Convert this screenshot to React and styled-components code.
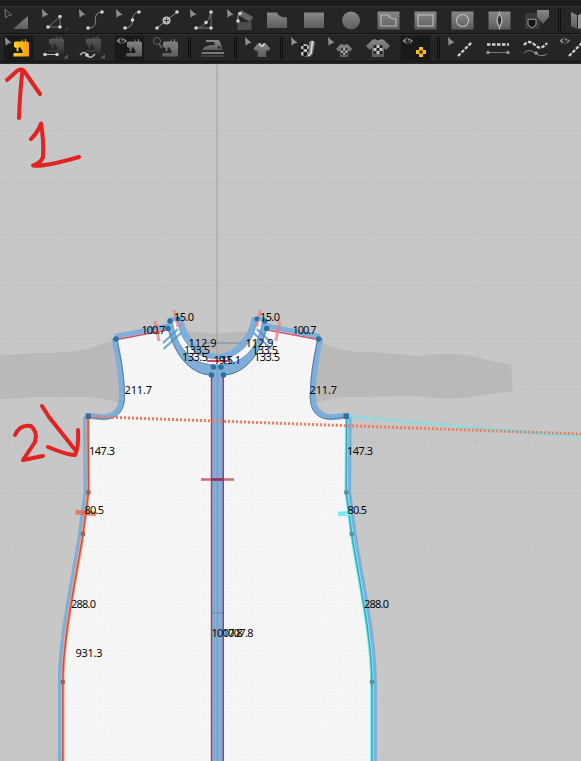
import React from "react";
import styled, { createGlobalStyle } from "styled-components";

const GlobalStyle = createGlobalStyle`
  body { margin: 0; background: #c7c7c7; overflow: hidden; }
`;

const Window = styled.main`
  display: flex;
  flex-direction: column;
  width: 581px;
  height: 761px;
  overflow: hidden;
  background: #c7c7c7;
`;

const Toolbars = styled.header`
  flex: none;
  box-sizing: border-box;
  height: 64px;
  padding-top: 6px;
  background: #1c1c1e;
  border-bottom: 2px solid #242424;
`;

const ToolRow = styled.div`
  box-sizing: border-box;
  display: flex;
  align-items: center;
  gap: 6px;
  height: 28px;
  padding-left: 3px;
  overflow: hidden;
  background: #252527;
  border-top: 1px solid #303033;
  border-bottom: 1px solid #101011;
`;

const Tool = styled.button`
  flex: none;
  width: 31px;
  height: 26px;
  padding: 0;
  border: 0;
  background: ${(p) => (p.$active ? "#19191a" : "transparent")};
  box-shadow: ${(p) => (p.$active ? "inset 0 0 0 1px #202022" : "none")};
`;

const Icon = styled.svg`
  display: block;
  width: 31px;
  height: 26px;
`;

const Separator = styled.span`
  flex: none;
  box-sizing: border-box;
  width: 3px;
  height: 22px;
  border: solid #0d0d0e;
  border-width: 0 1px;
`;

const Canvas = styled.svg`
  display: block;
  flex: none;
  width: 581px;
  height: 697px;
`;

const Measure = styled.text`
  font-family: "Noto Sans", "Open Sans", sans-serif;
  font-size: 11px;
  fill: #080808;
`;

const Cursor = () => <path d="M2 2 L8.600 8 L5.800 8.300 L4.800 9 L2.600 10.800 Z" fill="#8e8e8e" />;
const Corner = () => <path d="M28 19v4.500h-4.500z" fill="#5c5c5e" />;
const Dots = ({ at }) => at.map(([x, y]) => <circle key={`${x}-${y}`} cx={x} cy={y} r="1.800" fill="#d2d2d2" />);
const Machine = ({ fill = "url(#metal)", x = 0, y = 0 }) => (
  <path
    transform={`translate(${x} ${y})`}
    d="M11 8q0-1.500 1.500-1.500H18.500V4.500h1v2H22V4h1v2.500h1q2 0 2 2V21.500H10.500V18H19.500V15.500L18 14V12.500H15.500V15.500L14.500 17L13.500 15.500V13L11 12z"
    fill={fill}
  />
);
const Eye = () => (
  <g>
    <path d="M2.500 6Q7.500-1 13 6Q7.500 11 2.500 6z" fill="#8b8b8b" />
    <circle cx="8" cy="5.400" r="2.500" fill="#242426" />
    <circle cx="8.500" cy="4.700" r=".8" fill="#d8d8d8" />
  </g>
);
const Shirt = ({ checks }) => (
  <g>
    <path d="M6 1L9 0q3 2.500 6 0l3 1 6 6-4 4-2-2v9H6V9l-2 2-4-4z" fill="url(#metal)" />
    {checks ? (
      <g>
        <path d="M7.500 6h9v9h-9z" fill="#272729" />
        <path d="M10.500 6h3v3h-3zm-3 3h3v3h-3zm6 0h3v3h-3zm-3 3h3v3h-3z" fill="#c4c4c4" />
      </g>
    ) : (
      <path d="M8.500 0q.5 4 3.500 4t3.500-4" fill="none" stroke="#e2e2e2" strokeWidth="1.700" />
    )}
  </g>
);

const framed = (inner) => (
  <g>
    <rect x="4.500" y="4.500" width="22" height="18" fill="url(#metal)" />
    <g fill="none" stroke="#b9b9b9" strokeWidth="1.200">{inner}</g>
  </g>
);

const drawings = {
  transform: <g><path d="M2 2l6.600 6-2.800.3-3.200 2.500z" fill="none" stroke="#777" /><path d="M10 22L25 9v13z" fill="url(#metal)" /></g>,
  editPoints: <g><Cursor /><path d="M8 20L20 10V20z" fill="none" stroke="#777" /><Dots at={[[8, 20], [20, 9.500], [20, 20]]} /><path d="M28 20v3.500h-3.500z" fill="#434345" /></g>,
  curve: <g><Cursor /><path d="M11 21C25 21 12 6 25 5" fill="none" stroke="#929292" /><Dots at={[[11, 21], [25, 5]]} /></g>,
  curvePoint: <g><Cursor /><path d="M11 21C18 20 18 17 18.500 13C19 8 20 6 25 5" fill="none" stroke="#929292" /><Dots at={[[11, 21], [18.500, 13], [25, 5]]} /></g>,
  addPoint: <g><path d="M6 21L26 5" stroke="#929292" /><Dots at={[[6, 21], [26, 5]]} /><circle cx="15.500" cy="13.500" r="4" fill="#bcbcbc" /><path d="M13 13.500h5m-2.500-2.500v5" stroke="#444" /></g>,
  smooth: <g><Cursor /><path d="M8 21Q20 20 23 5V21z" fill="none" stroke="#777" /><Dots at={[[8, 21], [18, 15.500], [23, 5], [23, 21]]} /></g>,
  rotate: <g><Cursor /><path d="M12.500 15v8h14v-8z" fill="#4d4d4f" /><path d="M16 3l12 7-3 5-12-7z" fill="#646466" /><path d="M15 6Q12 8 13 14" fill="none" stroke="#aaa" /><Dots at={[[15, 6.500], [13, 14]]} /></g>,
  polygon: <path d="M5 5.500h10q2 5 10 5v10.500H5z" fill="url(#metal)" />,
  rectangle: <rect x="5" y="5.500" width="20" height="15.500" fill="url(#metal)" />,
  circle: <circle cx="15" cy="13.500" r="9" fill="url(#metal)" />,
  innerPolygon: framed(<path d="M8 8h7q2 4 8 4v7H8z" />),
  innerRect: framed(<rect x="8" y="8" width="15" height="11" />),
  innerCircle: framed(<circle cx="15.500" cy="13.500" r="6" />),
  dart: framed(<path d="M15.500 7q5 6.500 0 13q-5-6.500 0-13zM15.500 4.500v2.500m0 13v2.500" fill="#303032" />),
  pocket: <g><path d="M4 6h15v16H4z" fill="#39393b" /><path d="M7 12q4 1 8 0v6l-4 3-4-3z" fill="#151516" stroke="#999" /><path d="M16 3h12v7l-6 7-6-7z" fill="url(#metal)" /></g>,
  fold: <g><path d="M4 5l6 3v14l-6-3z" fill="url(#metal)" /><path d="M11 8l7-3v15l-7 2z" fill="#999" /></g>,
  sewEdit: <g><Cursor /><Machine fill="url(#gold)" /></g>,
  sewSegment: <g><Machine x={-2} y={-3} fill="url(#dim)" /><path d="M4 19.500h15" stroke="#252527" strokeWidth="5" /><path d="M5 19.500h12" stroke="#bbb" /><Dots at={[[5, 19.500], [17, 19.500]]} /><Corner /></g>,
  sewFree: <g><Machine x={-2} y={-3} fill="url(#dim)" /><path d="M3 19.500h17" stroke="#252527" strokeWidth="5" /><path d="M3 20q4-5 7 0t8-1" fill="none" stroke="#bbb" strokeWidth="1.500" /><Dots at={[[10, 20]]} /><Corner /></g>,
  sewShow: <g><Eye /><Machine x={2} /></g>,
  sewFind: <g><circle cx="6" cy="6" r="3.500" fill="none" stroke="#686868" /><path d="M8 9l3 4" stroke="#686868" strokeWidth="1.500" /><Machine x={1} /></g>,
  iron: <g><path d="M5 15q2-5 13-5L17 7H9V5h12q3 0 4 10z" fill="url(#metal)" /><path d="M5 17h22v2H4z" fill="#777" /><path d="M4 20h23v2H4z" fill="#3d3d3f" /><circle cx="22" cy="12.500" r="1.300" fill="#222" /></g>,
  clothing: <g><Cursor /><g transform="translate(10.500 8) scale(.7 .78)"><Shirt /></g></g>,
  texture: <g><Cursor /><path d="M12 8q5 1 8 3l3 9q-6 3-11 0z" fill="#bbb" /><path d="M12 8h2.500v3H12zm2.500 3H18v3h-3.500zM12 14h2.500v3H12zm2.500 3H18v4h-3.500zM18 14h2.500v3H18z" fill="#171718" /><path d="M20 7q3-3 6 0l-2 12q-2 4-8 3 4-2 4-15z" fill="url(#metal)" /><path d="M23.500 6l-1.500 12-3 3" fill="none" stroke="#e0e0e0" strokeWidth="1.700" /></g>,
  textureShirt: <g><Cursor /><g transform="translate(10 9) scale(.68 .72)"><Shirt checks /></g></g>,
  colorShirt: <g transform="translate(3 4)"><Shirt checks /></g>,
  showPattern: <g><Eye /><path d="M19 12h4v3h3v4h-3v3h-4v-3h-3v-4h3z" fill="#f9bb16" /><path d="M19.500 15.500h3v3h-3z" fill="#29251a" /></g>,
  topStitch: <g><Cursor /><path d="M12 21L26 7" stroke="#d2d2d2" strokeWidth="2.300" strokeDasharray="3.500 1.500" /></g>,
  segmentStitch: <g><path d="M4 9.500h22" stroke="#d2d2d2" strokeWidth="2.300" strokeDasharray="3.500 1.500" /><path d="M4 17.500h22" stroke="#777" /><circle cx="5" cy="17.500" r="1.700" fill="#999" /><circle cx="25" cy="17.500" r="1.700" fill="#999" /></g>,
  freeStitch: <g><path d="M4 10q5-6 11 0t12-2" fill="none" stroke="#d2d2d2" strokeWidth="2.300" strokeDasharray="3.500 1.500" /><path d="M4 18q5-5 11 0t12 1" fill="none" stroke="#888" /><circle cx="16" cy="18" r="1.800" fill="#999" /></g>,
  showStitch: <g><Eye /><path d="M12 21L26 7" stroke="#d2d2d2" strokeWidth="2.300" strokeDasharray="3.500 1.500" /></g>,
};

const patternTools = ["transform", "editPoints", "curve", "curvePoint", "addPoint", "smooth", "rotate", "polygon", "rectangle", "circle", "innerPolygon", "innerRect", "innerCircle", "dart", "pocket", null, "fold"];
const sewingTools = ["sewEdit", "sewSegment", "sewFree", "sewShow", "sewFind", null, "iron", null, "clothing", null, "texture", "textureShirt", "colorShirt", "showPattern", null, "topStitch", "segmentStitch", "freeStitch", "showStitch"];
const activeTools = new Set(["sewEdit", "sewShow", "showPattern"]);

const ToolStrip = ({ tools }) => (
  <ToolRow>
    {tools.map((name, i) =>
      name ? (
        <Tool key={name} aria-label={name} $active={activeTools.has(name)}>
          <Icon viewBox="0 0 31 26">{drawings[name]}</Icon>
        </Tool>
      ) : (
        <Separator key={i} />
      )
    )}
  </ToolRow>
);

const LEFT_ARMHOLE = "M116 339C121 362 123.500 377 123.500 397C123.500 410 116 418 105 418C99 418 94 416.500 88 416.500";
const LEFT_SIDE = "M88 416.500L88.500 492L83 534C76 580 63 636 62.800 682V765";
const FRONT = "M116 339L168 328C174 352 188 374 211 375V765H62.800V682C63 636 76 580 83 534L88.500 492V416.500C94 416.500 99 418 105 418C116 418 123.500 410 123.500 397C123.500 377 121 362 116 339Z";

const mirror = (right) => (right ? "translate(434.700 0) scale(-1 1)" : undefined);

const HalfPattern = ({ edge, halo, core, right }) => (
  <g transform={mirror(right)}>
    <path d={FRONT} fill="#f6f6f6" />
    <path d={FRONT} fill="url(#weave)" />
    <g fill="none" stroke="#7faed9">
      <path d={LEFT_ARMHOLE} strokeWidth="6" transform="translate(-1.500 -.800)" />
      <path d={LEFT_SIDE} strokeWidth="5" transform="translate(-2.500 0)" />
      <path d="M115 336.500L168 326" strokeWidth="5" />
    </g>
    <path d={LEFT_ARMHOLE} fill="none" stroke="#4c79a1" strokeWidth=".9" transform="translate(.9 .900)" />
    <path d="M117 339.500L167 330" stroke="#cf526d" strokeWidth="1.500" />
    <path d={LEFT_SIDE} fill="none" stroke={halo} strokeWidth="3.500" />
    <path d={LEFT_SIDE} fill="none" stroke={core} strokeWidth="1.500" />
    <g fill={edge}>
      <circle cx="88.300" cy="492.500" r="2.400" />
      <circle cx="83" cy="534" r="2.400" />
      <circle cx="62.800" cy="682" r="2.400" />
    </g>
    <circle cx="116" cy="339" r="2.800" fill="#346e9b" />
  </g>
);

const Collar = ({ right }) => (
  <g transform={mirror(right)} fill="none">
    <path d="M166 327L170 317L183 317C186 338 202 354 217.500 354V375H211C188 374 174 352 168 328Z" fill="#7faed9" />
    <path d="M172.500 322L177.500 320C181 343 196 358.500 217.500 359V364.500C190 365 176 345 172.500 322Z" fill="#f7f7f7" />
    <path d="M177.500 320C181 343 196 358.500 217.500 359" stroke="#5a8cb8" strokeWidth=".7" />
    <path d="M172.500 322C176 345 190 364.500 213 365" stroke="#5a8cb8" strokeWidth=".7" />
    <path d="M168 328C174 352 188 374 211 375" stroke="#41749f" />
    <path d="M174 310L178 327M155 321L159 341" stroke="#ed7c80" strokeWidth="3" opacity=".75" />
    <path d="M163 343L178 329M163.500 349L181 333" stroke="#4d8fce" strokeWidth="2.300" opacity=".75" />
    <g fill="#2c6f9f">
      <circle cx="170" cy="321" r="2.700" />
      <circle cx="178" cy="319" r="2.400" />
      <circle cx="168" cy="328.500" r="2.700" />
    </g>
  </g>
);

const measurements = [
  ["15.0", 174, 321, 20], ["15.0", 260, 321, 20],
  ["100.7", 141.500, 334, 24], ["100.7", 292.500, 334, 24],
  ["112.9", 188.500, 347, 28], ["112.9", 245.500, 347, 28],
  ["133.5", 184, 353.500, 26], ["133.5", 252, 353.500, 26],
  ["133.5", 182, 361, 26], ["133.5", 254, 361, 26],
  ["19.1", 213.500, 364, 19], ["15.1", 221, 364, 20],
  ["211.7", 124.500, 394, 27.500], ["211.7", 309.500, 394, 27.500],
  ["147.3", 89, 455, 26], ["147.3", 347, 455, 26],
  ["80.5", 84.500, 514, 19.500], ["80.5", 347.500, 514, 19.500],
  ["288.0", 71, 608, 25], ["288.0", 364, 608, 25],
  ["931.3", 75.500, 657, 27],
  ["1007.8", 211.500, 637, 31], ["1007.8", 222.500, 637, 31],
];

export default function App() {
  return (
    <Window>
      <GlobalStyle />
      <Toolbars>
        <ToolStrip tools={patternTools} />
        <ToolStrip tools={sewingTools} />
      </Toolbars>
      <Canvas viewBox="0 64 581 697">
        <defs>
          <linearGradient id="metal" x1="0" y1="0" x2="0" y2="1"><stop stopColor="#888" /><stop offset="1" stopColor="#5c5c5c" /></linearGradient>
          <linearGradient id="dim" x1="0" y1="0" x2="0" y2="1"><stop stopColor="#5e5e60" /><stop offset="1" stopColor="#303032" /></linearGradient>
          <linearGradient id="gold"><stop stopColor="#ffd02b" /><stop offset="1" stopColor="#f79c0b" /></linearGradient>
          <pattern id="grid" x="9" y="78" width="52" height="51.900" patternUnits="userSpaceOnUse"><path d="M.5 0V52M0 .5H52" stroke="#bdbdbd" fill="none" /></pattern>
          <pattern id="weave" width="5.200" height="5.200" patternUnits="userSpaceOnUse"><path d="M0 .5H3M.5 0V2" stroke="#f0f0f0" strokeWidth=".5" /></pattern>
        </defs>
        <rect y="64" width="581" height="697" fill="#c7c7c7" />
        <path d="M0 355Q18 354 35 353Q75 353 90 348Q115 338 150 333Q180 329 217 334Q250 329 285 333Q310 335 330 346Q347 353 373 352L420 356Q452 351 477 357Q493 362 511 364L513 391L477 396Q451 401 415 396Q365 397 340 397L305 405H125Q112 399 90 397H36Q15 399 0 399Z" fill="#b9b9b9" />
        <rect y="64" width="581" height="697" fill="url(#grid)" opacity=".65" />
        <path d="M217 64V761" stroke="#a0a0a0" />
        <HalfPattern halo="#f7a58b" core="#cf5139" edge="#a65f4c" />
        <HalfPattern right halo="#7cecf5" core="#34aab9" edge="#569699" />
        <Collar />
        <Collar right />
        <path d="M202 343H241" stroke="#688dad" />
        <path d="M207 361H229" stroke="#c03463" strokeWidth="1.800" />
        <rect x="211" y="375" width="12.500" height="386" fill="#83aed6" />
        <path d="M217.300 364V761" stroke="#8097af" />
        <path d="M211.500 376V761M223.300 376V761" stroke="#a33965" strokeWidth="1.400" />
        <g fill="#2c6f9f">
          <circle cx="213.500" cy="367" r="2.800" /><circle cx="221" cy="367" r="2.800" />
          <circle cx="211.500" cy="375" r="2.800" /><circle cx="223.500" cy="375" r="2.800" />
        </g>
        <path d="M201 479.500H234" stroke="#bd4965" strokeWidth="2.500" opacity=".8" />
        <path d="M211.500 479.500H223.500" stroke="#8c315e" strokeWidth="2.500" />
        <path d="M212 613H223" stroke="#6889aa" />
        <path d="M346 416L581 437" stroke="#65e7ef" strokeWidth="3" strokeDasharray="2 2" />
        <path d="M88 416.500L581 434" stroke="#f17856" strokeWidth="3" strokeDasharray="2 2" />
        <path d="M75.500 512L96 514" stroke="#ea6541" strokeWidth="4.500" opacity=".75" />
        <path d="M338 514L350 513" stroke="#78eaf3" strokeWidth="4.500" />
        <g fill="#346f99">
          <rect x="85.500" y="413.500" width="5.500" height="5.500" rx="1" />
          <rect x="343.500" y="413.500" width="5.500" height="5.500" rx="1" />
        </g>
        {measurements.map(([value, x, y, width], i) => (
          <Measure key={i} x={x} y={y} textLength={width}>{value}</Measure>
        ))}
        <g fill="none" stroke="#e12323" strokeWidth="4" strokeLinecap="round" strokeLinejoin="round">
          <path d="M7 80L17 71Q21 68 24 71L40 94M22.500 70Q20 91 19 118" />
          <path d="M31 139Q38 132 41 123.500Q44 141 43 157Q41 163 33 165.500Q45 167 79 157" />
          <path d="M15 435Q20 424 31 426Q38 432 35 442L23 460L43 456" />
          <path d="M42 406L49 417L76 451M48 447Q67 455 75 455Q79 447 78 430" />
        </g>
      </Canvas>
    </Window>
  );
}
